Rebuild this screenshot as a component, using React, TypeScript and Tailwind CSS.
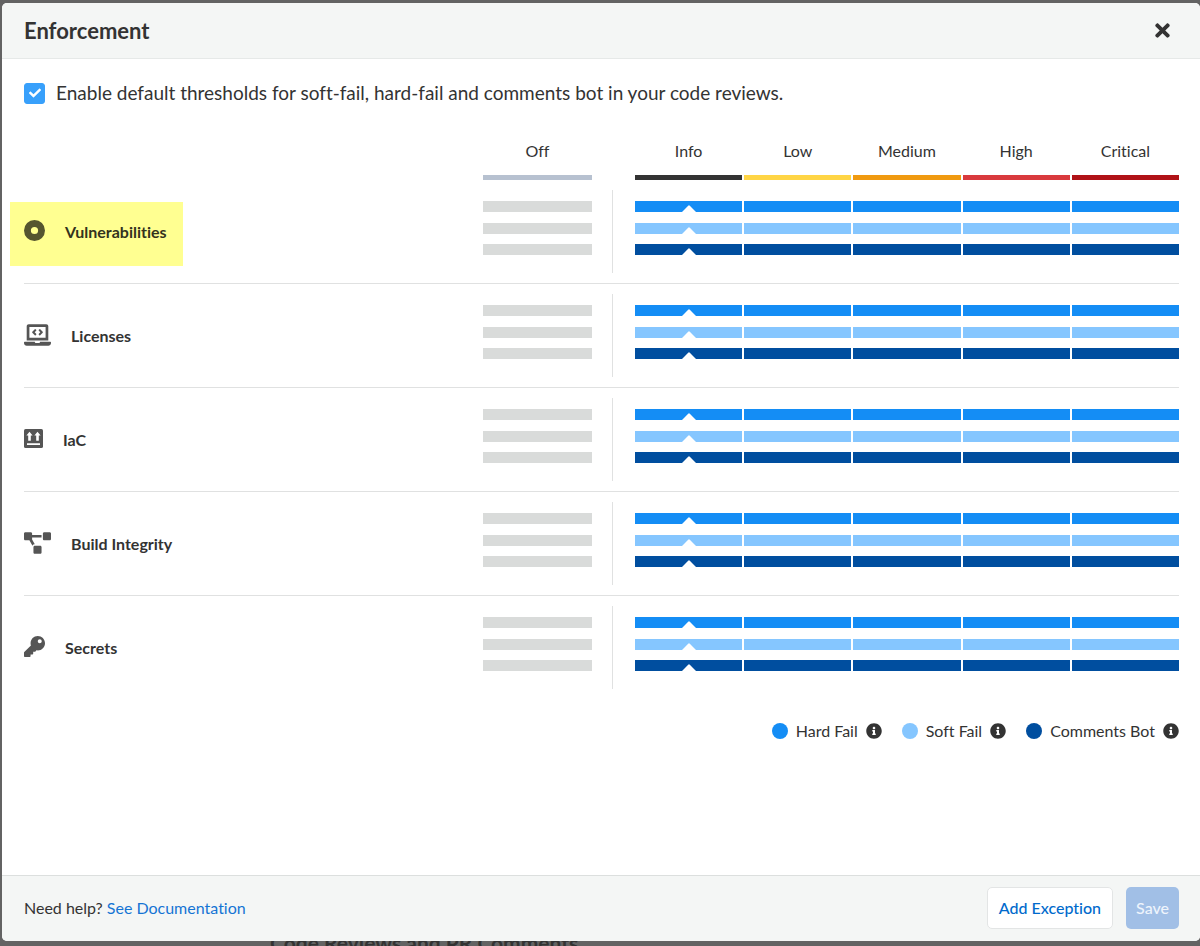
import React, { useState } from "react";
import { FaCheck, FaDotCircle, FaInfoCircle, FaKey, FaLaptopCode, FaProjectDiagram, FaTimes } from "react-icons/fa";

const levels = [
  { name: "Info", color: "bg-[#333333]" },
  { name: "Low", color: "bg-[#ffd545]" },
  { name: "Medium", color: "bg-[#f09a10]" },
  { name: "High", color: "bg-[#d93a3d]" },
  { name: "Critical", color: "bg-[#b01217]" },
];

const actions = [
  { name: "Hard Fail", color: "bg-[#148df5]" },
  { name: "Soft Fail", color: "bg-[#85c6ff]" },
  { name: "Comments Bot", color: "bg-[#004e9f]" },
];

const columns = "grid grid-cols-[minmax(0,1fr)_109px_43px_47.1%]";

function ThisWayUpIcon() {
  return (
    <svg viewBox="0 0 19 19" className="h-[19px] w-[19px]" fill="none" aria-hidden="true">
      <rect width="19" height="19" rx="1.6" fill="currentColor" />
      <path d="M2.4 6.6 5.5 2.7l3.1 3.9H6.8v5.2H4.2V6.6zM10.4 6.6l3.1-3.9 3.1 3.9h-1.8v5.2h-2.6V6.6zM3 14.3h13v1.6H3z" fill="#fff" />
    </svg>
  );
}

function DiscIcon() {
  return (
    <svg viewBox="0 0 21 21" className="h-[21px] w-[21px]" aria-hidden="true">
      <path fill="currentColor" fillRule="evenodd" d="M10.5 0a10.5 10.5 0 1 1 0 21 10.5 10.5 0 0 1 0-21zm0 6.9a3.6 3.6 0 1 0 0 7.2 3.6 3.6 0 0 0 0-7.2z" />
    </svg>
  );
}

const categories = [
  { name: "Vulnerabilities", icon: <DiscIcon />, marked: true },
  { name: "Licenses", icon: <FaLaptopCode className="h-[22px] w-[27px]" /> },
  { name: "IaC", icon: <ThisWayUpIcon /> },
  { name: "Build Integrity", icon: <FaProjectDiagram className="h-[22px] w-[27px]" /> },
  { name: "Secrets", icon: <FaKey size={21} /> },
];

function Threshold({ id, level, color, checked, onChange }: {
  id: string; level: string; color: string; checked: boolean; onChange: () => void;
}) {
  return (
    <span className="relative block h-[11px]">
      <input
        type="radio"
        name={id}
        aria-label={`${id} ${level}`}
        checked={checked}
        onChange={onChange}
        className={`m-0 block h-full w-full cursor-pointer appearance-none ${color}`}
      />
      {checked && (
        <svg viewBox="0 0 14 7" className="pointer-events-none absolute inset-x-0 bottom-0 mx-auto h-[7px] w-[14px]">
          <path d="M0 7 6.2.7Q7 0 7.8.7L14 7z" fill="#fff" />
        </svg>
      )}
    </span>
  );
}

function CategoryRow({ name, icon, marked, last }: { name: string; icon: React.ReactNode; marked?: boolean; last: boolean }) {
  const [chosen, setChosen] = useState(["Info", "Info", "Info"]);
  const choose = (row: number, level: string) => setChosen(chosen.map((c, i) => (i === row ? level : c)));
  return (
    <section className={`${columns} h-[104px] border-b ${last ? "border-transparent" : "border-[#e0e1e1]"}`}>
      <div className="flex items-start pt-[22px]">
        <div className={`-ml-[14px] flex h-16 items-center gap-5 pr-4 pb-1 pl-[14px] ${marked ? "bg-[#ffff91] text-[#33331d]" : "text-[#333333]"}`}>
          <span className={`-mt-[3px] ${marked ? "text-[#55552f]" : "text-[#555555]"}`}>{icon}</span>
          <h2 className="text-[16px] font-bold">{name}</h2>
        </div>
      </div>
      <div className="mt-[21px] flex h-[54px] flex-col justify-between">
        {actions.map((a, i) => (
          <Threshold key={a.name} id={`${name} ${a.name}`} level="Off" color="bg-[#d9dbda]" checked={chosen[i] === "Off"} onChange={() => choose(i, "Off")} />
        ))}
      </div>
      <div className="mx-5 my-[10px] w-px bg-[#e0e1e1]" />
      <div className="mt-[21px] flex h-[54px] flex-col justify-between">
        {actions.map((a, i) => (
          <div key={a.name} className="grid grid-cols-5 gap-0.5">
            {levels.map((l) => (
              <Threshold key={l.name} id={`${name} ${a.name}`} level={l.name} color={a.color} checked={chosen[i] === l.name} onChange={() => choose(i, l.name)} />
            ))}
          </div>
        ))}
      </div>
    </section>
  );
}

export default function App() {
  const [enabled, setEnabled] = useState(true);
  return (
    <div className="relative flex h-screen flex-col overflow-hidden bg-[#636363] pt-[3px] pb-[5px] pl-[2px] font-['Lato',sans-serif] text-[#333333] [font-variant-ligatures:none]">
      <p className="absolute bottom-[-9px] left-[270px] text-[21px] leading-[24px] font-bold text-[#333333]">Code Reviews and PR Comments</p>
      <main className="relative flex min-h-0 flex-1 flex-col overflow-hidden rounded-[5px] bg-white">
        <header className="flex h-[56px] shrink-0 items-center justify-between border-b border-[#e6e9e8] bg-[#f4f6f5] pr-[27px] pl-[22px]">
          <h1 className="text-[22px] font-bold">Enforcement</h1>
          <button type="button" aria-label="Close"><FaTimes size={21} /></button>
        </header>

        <div className="min-h-0 flex-1 overflow-auto pr-[21px] pl-[22px]">
          <label className="mt-[19px] flex h-[30px] items-center gap-[11px] text-[19px]">
            <span className="relative flex">
              <input
                type="checkbox"
                checked={enabled}
                onChange={() => setEnabled(!enabled)}
                className="h-[21px] w-[21px] appearance-none rounded-[3px] border border-[#38a0fb] checked:bg-[#38a0fb]"
              />
              {enabled && <FaCheck size={12} className="pointer-events-none absolute inset-0 m-auto text-white" />}
            </span>
            Enable default thresholds for soft-fail, hard-fail and comments bot in your code reviews.
          </label>

          <div className={`${columns} mt-[31px] text-center text-[16px] leading-[24px]`}>
            <div className="col-start-2">
              Off
              <div className="mt-3 h-[5px] bg-[#b7c1d0]" />
            </div>
            <div className="col-start-4 grid grid-cols-5 gap-0.5">
              {levels.map((l) => (
                <div key={l.name}>
                  {l.name}
                  <div className={`mt-3 h-[5px] ${l.color}`} />
                </div>
              ))}
            </div>
          </div>

          {categories.map((c, i) => (
            <CategoryRow key={c.name} {...c} last={i === categories.length - 1} />
          ))}

          <ul className="mt-[19px] flex justify-end gap-5 text-[16px] leading-[24px]">
            {actions.map((a) => (
              <li key={a.name} className="flex items-center gap-2">
                <span className={`h-4 w-4 rounded-full ${a.color}`} />
                {a.name}
                <FaInfoCircle size={16} />
              </li>
            ))}
          </ul>
        </div>

        <footer className="flex h-[66px] shrink-0 items-center justify-between border-t border-[#dcdfde] bg-[#f4f6f5] pr-[21px] pb-[2px] pl-[22px] text-[16px]">
          <p>
            Need help? <a href="#" className="text-[#1474d4]">See Documentation</a>
          </p>
          <div className="flex gap-[13px]">
            <button type="button" className="h-[42px] rounded-[5px] border border-[#e3e5e5] bg-white px-[11px] font-medium text-[#006acc]">Add Exception</button>
            <button type="button" disabled className="h-[42px] rounded-[5px] bg-[#a1bfe6] px-[10px] font-medium text-[#eef4fc]">Save</button>
          </div>
        </footer>
      </main>
    </div>
  );
}
